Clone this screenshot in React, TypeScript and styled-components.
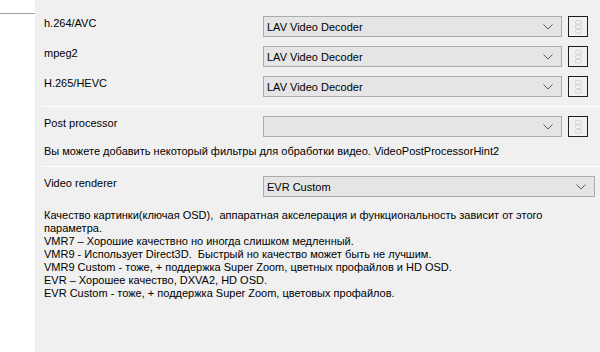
import styled, { createGlobalStyle } from 'styled-components'

const GlobalStyle = createGlobalStyle`
  html, body {
    margin: 0;
    padding: 0;
    background: #f0f0f0;
  }
  body {
    font-family: "Liberation Sans", Arial, sans-serif;
    font-size: 11px;
    color: #000;
  }
`

const Window = styled.div`
  display: flex;
  width: 600px;
  height: 352px;
  overflow: hidden;
`

const SideList = styled.div`
  width: 35px;
  flex-shrink: 0;
  background: #fff;
`

const SideHeader = styled.div`
  height: 13px;
  border-bottom: 1px solid #a0a0a0;
`

const Page = styled.div`
  flex: 1;
  display: flex;
  flex-direction: column;
  padding: 16px 0 0 9px;
`

const Grid = styled.div`
  display: grid;
  grid-template-columns: 213px 299px 20px;
  column-gap: 6px;
  row-gap: 9px;
  align-items: center;
`

const Label = styled.div`
  height: 21px;
  line-height: 14px;
  white-space: nowrap;
`

const Combo = styled.div<{ $span?: boolean }>`
  ${(p) => (p.$span ? 'grid-column: 2 / span 2; width: 332px;' : '')}
  box-sizing: border-box;
  height: 21px;
  border: 1px solid #adadad;
  background: #e5e5e5;
  display: flex;
  align-items: center;
  padding-left: 3px;
  white-space: nowrap;
`

const ComboText = styled.span`
  flex: 1;
`

const Arrow = styled.svg`
  width: 10px;
  height: 6px;
  margin-right: 8px;
`

const Dots = styled.div`
  box-sizing: border-box;
  width: 20px;
  height: 21px;
  border: 1px solid #1e1e1e;
  display: flex;
  align-items: center;
  justify-content: center;
`

const Separator = styled.div`
  height: 1px;
  background: #fff;
  margin: 9px 0 9px -3px;
`

const Hint = styled.div`
  margin-top: 8px;
  white-space: nowrap;
`

const Description = styled.div`
  margin-top: 12px;
  line-height: 13px;
  white-space: nowrap;
`

const Chevron = () => (
  <Arrow viewBox="0 0 10 6">
    <polyline points="0.5,0.5 5,5 9.5,0.5" fill="none" stroke="#5a5a5a" strokeWidth="1" />
  </Arrow>
)

const DotsIcon = () => (
  <svg width="7" height="14" viewBox="0 0 7 14">
    {[0.5, 5, 9.5].map((y) => (
      <rect key={y} x="0.5" y={y} width="6" height="3.5" rx="1" fill="none" stroke="#d2d2d2" strokeWidth="1" />
    ))}
  </svg>
)

const decoders = [
  { label: 'h.264/AVC', value: 'LAV Video Decoder' },
  { label: 'mpeg2', value: 'LAV Video Decoder' },
  { label: 'H.265/HEVC', value: 'LAV Video Decoder' },
]

const App = () => {
  return (
    <>
      <GlobalStyle />
      <Window>
        <SideList>
          <SideHeader />
        </SideList>
        <Page>
          <Grid>
            {decoders.map((d) => [
              <Label key={d.label + 'l'}>{d.label}</Label>,
              <Combo key={d.label + 'c'}>
                <ComboText>{d.value}</ComboText>
                <Chevron />
              </Combo>,
              <Dots key={d.label + 'b'}>
                <DotsIcon />
              </Dots>,
            ])}
          </Grid>
          <Separator />
          <Grid>
            <Label>Post processor</Label>
            <Combo>
              <ComboText />
              <Chevron />
            </Combo>
            <Dots>
              <DotsIcon />
            </Dots>
          </Grid>
          <Hint>Вы можете добавить некоторый фильтры для обработки видео. VideoPostProcessorHint2</Hint>
          <Separator />
          <Grid>
            <Label>Video renderer</Label>
            <Combo $span>
              <ComboText>EVR Custom</ComboText>
              <Chevron />
            </Combo>
          </Grid>
          <Description>
            Качество картинки(ключая OSD),&nbsp; аппаратная акселерация и функциональность зависит от этого
            <br />
            параметра.
            <br />
            VMR7 – Хорошие качествно но иногда слишком медленный.
            <br />
            VMR9 - Использует Direct3D.&nbsp; Быстрый но качество может быть не лучшим.
            <br />
            VMR9 Custom - тоже, + поддержка Super Zoom, цветных профайлов и HD OSD.
            <br />
            EVR – Хорошее качество, DXVA2, HD OSD.
            <br />
            EVR Custom - тоже, + поддержка Super Zoom, цветовых профайлов.
          </Description>
        </Page>
      </Window>
    </>
  )
}

export default App
